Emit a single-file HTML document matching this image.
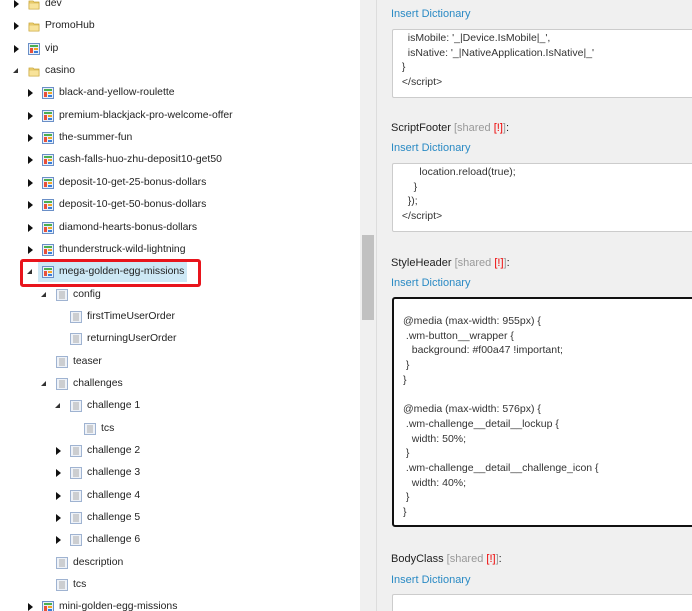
<!DOCTYPE html>
<html><head><meta charset="utf-8"><style>
*{margin:0;padding:0;box-sizing:border-box}
html,body{width:692px;height:611px;overflow:hidden}
body{background:#fff;font-family:"Liberation Sans",Arial,sans-serif;font-size:11px;color:#222;position:relative}
.row{position:absolute;height:18px;line-height:18px;white-space:nowrap;font-size:10.4px}
.arr{position:absolute;top:0;width:10px;height:18px}
.arr.c::before{content:"";position:absolute;left:2px;top:5px;border-left:5px solid #111;border-top:4px solid transparent;border-bottom:4px solid transparent}
.arr.o::before{content:"";position:absolute;left:1px;top:6px;border-right:5px solid #333;border-top:5px solid transparent}
.ic{position:absolute;top:3px;width:12px;height:12px}
.t{position:absolute;top:0}
#sb{position:absolute;left:360px;top:0;width:17px;height:611px;background:#f0f0f0;border-right:1px solid #ddd}
#th{position:absolute;left:362px;top:235px;width:12px;height:85px;background:#c1c1c1}
#rp{position:absolute;left:377px;top:0;width:315px;height:611px;background:#f0f0f0;overflow:hidden}
.lbl{position:absolute;left:14px;font-size:11px;color:#222}
.lbl .g{color:#999}.lbl .r{color:#e00}
.ins{position:absolute;left:14px;color:#2a8ac4;font-size:11px}
.box{position:absolute;left:15px;width:320px;background:#fff;border:1px solid #ccc;border-radius:2px;font-size:10.5px;line-height:14.6px;color:#333;padding:3px 0 0 6px;white-space:pre}
</style></head><body>
<div style="position:absolute;left:38px;top:262px;width:149px;height:20px;background:#cde8f5"></div>
<div style="position:absolute;left:20px;top:259px;width:181px;height:28px;border:3px solid #e8141c;border-radius:3px"></div>
<div id="rows"></div>
<div id="sb"></div><div id="th"></div>
<div id="rp">
<div class="ins" style="top:8px">Insert Dictionary</div>
<div class="box" style="top:29px;height:69px;padding-top:1px">   isMobile: '_|Device.IsMobile|_',
   isNative: '_|NativeApplication.IsNative|_'
 }
 &lt;/script&gt;</div>
<div class="lbl" style="top:122px">ScriptFooter <span class="g">[shared <span class="r">[!]</span>]</span>:</div>
<div class="ins" style="top:142px">Insert Dictionary</div>
<div class="box" style="top:163px;height:69px;padding-top:1px">       location.reload(true);
     }
   });
 &lt;/script&gt;</div>
<div class="lbl" style="top:257px">StyleHeader <span class="g">[shared <span class="r">[!]</span>]</span>:</div>
<div class="ins" style="top:277px">Insert Dictionary</div>
<div class="box" style="top:297px;height:230px;border:2px solid #111;border-radius:3px;padding-top:15px;line-height:14.7px;padding-left:9px">@media (max-width: 955px) {
 .wm-button__wrapper {
   background: #f00a47 !important;
 }
}

@media (max-width: 576px) {
 .wm-challenge__detail__lockup {
   width: 50%;
 }
 .wm-challenge__detail__challenge_icon {
   width: 40%;
 }
}</div>
<div class="lbl" style="top:553px">BodyClass <span class="g">[shared <span class="r">[!]</span>]</span>:</div>
<div class="ins" style="top:574px">Insert Dictionary</div>
<div class="box" style="top:594px;height:30px"></div>
</div>
<script>
const F='<svg class="ic" viewBox="0 0 12 12"><path d="M1 3h4l1 1h5v7H1z" fill="#f3d67a" stroke="#c9a63b" stroke-width="0.8"/><path d="M1 5h10v6H1z" fill="#f8e39a" stroke="#c9a63b" stroke-width="0.6"/></svg>';
const L='<svg class="ic" viewBox="0 0 12 12"><rect x="0.5" y="0.5" width="11" height="11" fill="#e8f0fa" stroke="#6a8fc7"/><rect x="2" y="2" width="8" height="2" fill="#4caf50"/><rect x="2" y="5" width="3" height="5" fill="#e8503a"/><rect x="6" y="5" width="4" height="2" fill="#f5a623"/><rect x="6" y="8" width="4" height="2" fill="#3b7dd8"/></svg>';
const D='<svg class="ic" viewBox="0 0 12 12"><rect x="0.5" y="0.5" width="11" height="11" fill="#eef2f8" stroke="#9fb3d1"/><path d="M3 3h6M3 5h6M3 7h6M3 9h6" stroke="#aaa" stroke-width="1"/></svg>';
const rows=[[0,'c',F,'dev'],[0,'c',F,'PromoHub'],[0,'c',L,'vip'],[0,'o',F,'casino'],[1,'c',L,'black-and-yellow-roulette'],[1,'c',L,'premium-blackjack-pro-welcome-offer'],[1,'c',L,'the-summer-fun'],[1,'c',L,'cash-falls-huo-zhu-deposit10-get50'],[1,'c',L,'deposit-10-get-25-bonus-dollars'],[1,'c',L,'deposit-10-get-50-bonus-dollars'],[1,'c',L,'diamond-hearts-bonus-dollars'],[1,'c',L,'thunderstruck-wild-lightning'],[1,'o',L,'mega-golden-egg-missions'],[2,'o',D,'config'],[3,'',D,'firstTimeUserOrder'],[3,'',D,'returningUserOrder'],[2,'',D,'teaser'],[2,'o',D,'challenges'],[3,'o',D,'challenge 1'],[4,'',D,'tcs'],[3,'c',D,'challenge 2'],[3,'c',D,'challenge 3'],[3,'c',D,'challenge 4'],[3,'c',D,'challenge 5'],[3,'c',D,'challenge 6'],[2,'',D,'description'],[2,'',D,'tcs'],[1,'c',L,'mini-golden-egg-missions']];
let h='';rows.forEach((r,i)=>{const y=Math.round(-5+i*22.35);const x=12+r[0]*14;
h+=`<div class="row" style="top:${y}px;left:${x}px"><span class="arr ${r[1]}" style="left:0"></span><span style="position:absolute;left:16px;top:0">${r[2]}</span><span class="t" style="left:33px">${r[3]}</span></div>`;});
document.getElementById('rows').innerHTML=h;
</script>
</body></html>
